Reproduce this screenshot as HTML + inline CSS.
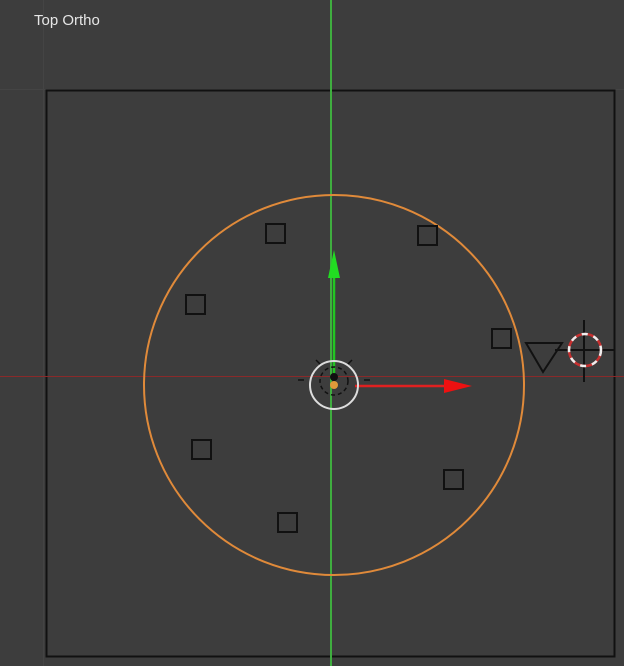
<!DOCTYPE html><html><head><style>body{margin:0;background:#3d3d3d;width:624px;height:666px;overflow:hidden;font-family:"Liberation Sans",sans-serif}</style></head><body>
<svg width="624" height="666" style="position:absolute;left:0;top:0">
<rect width="624" height="666" fill="#3d3d3d"/>
<g stroke="#444" stroke-width="1">
<line x1="43.5" y1="0" x2="43.5" y2="666"/><line x1="0" y1="89.5" x2="624" y2="89.5"/>
</g>
<text x="34" y="25" fill="#e6e6e6" font-size="15">Top Ortho</text>
<rect x="46.5" y="90.5" width="568" height="566" fill="none" stroke="#111" stroke-width="2"/>
<line x1="0" y1="376.5" x2="624" y2="376.5" stroke="#8a2a2a" stroke-width="1"/>
<line x1="331" y1="0" x2="331" y2="666" stroke="#3fae3f" stroke-width="2"/>
<circle cx="334" cy="385" r="190" fill="none" stroke="#e08a3a" stroke-width="2"/>
<g fill="none" stroke="#111" stroke-width="2">
<rect x="266" y="224" width="19" height="19"/><rect x="418" y="226" width="19" height="19"/>
<rect x="186" y="295" width="19" height="19"/><rect x="492" y="329" width="19" height="19"/>
<rect x="192" y="440" width="19" height="19"/><rect x="444" y="470" width="19" height="19"/>
<rect x="278" y="513" width="19" height="19"/>
<path d="M526 343 L562 343 L543 372 Z"/>
<line x1="584" y1="320" x2="584" y2="382"/><line x1="555" y1="350" x2="614" y2="350"/>
</g>
<circle cx="585" cy="350" r="16" fill="none" stroke="#c83030" stroke-width="2.5"/>
<circle cx="585" cy="350" r="16" fill="none" stroke="#eee" stroke-width="2.5" stroke-dasharray="6 6"/>
<line x1="334" y1="378" x2="334" y2="272" stroke="#22c622" stroke-width="2.5"/>
<path d="M334 250 L328 278 L340 278 Z" fill="#22dd22"/>
<line x1="355" y1="386" x2="448" y2="386" stroke="#e02020" stroke-width="2.5"/>
<path d="M472 386 L444 379 L444 393 Z" fill="#ee1111"/>
<circle cx="334" cy="385" r="24" fill="none" stroke="#ddd" stroke-width="2"/>
<circle cx="334" cy="381" r="14" fill="none" stroke="#111" stroke-width="1.5" stroke-dasharray="4 3"/>
<circle cx="334" cy="377" r="4" fill="#111"/>
<circle cx="334" cy="385" r="4" fill="#e09a3a"/>
<g stroke="#111" stroke-width="1.5"><line x1="298" y1="380" x2="304" y2="380"/><line x1="364" y1="380" x2="370" y2="380"/><line x1="316" y1="360" x2="320" y2="364"/><line x1="352" y1="360" x2="348" y2="364"/></g>
</svg>
</body></html>
